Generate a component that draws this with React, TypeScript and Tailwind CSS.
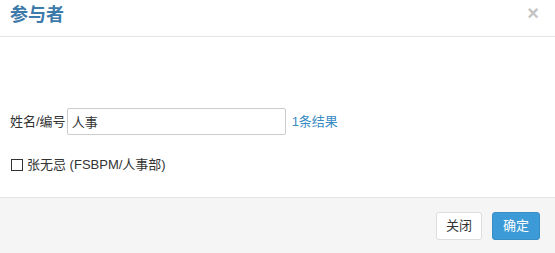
import { useState } from "react";

export default function App() {
  const [keyword, setKeyword] = useState("人事");
  const [checked, setChecked] = useState(false);

  return (
    <div className="w-[555px] h-[253px] bg-white flex flex-col text-[13px] text-[#333] font-['Liberation_Sans','Noto_Sans_CJK_SC',sans-serif]">
      {/* header */}
      <div className="h-[37px] shrink-0 border-b border-[#e5e5e5] pl-[10px] pr-[16px] flex items-center justify-between">
        <h4 className="text-[18px] font-bold text-[#3c7aaa] leading-none -mt-[7px]">参与者</h4>
        <button className="text-[20px] font-bold leading-none text-[#c4c4c4] -mt-[11px]">×</button>
      </div>

      {/* body */}
      <div className="flex-1 px-[10px] pt-[71px]">
        <div className="flex items-center">
          <span>姓名/编号</span>
          <input
            value={keyword}
            onChange={(e) => setKeyword(e.target.value)}
            className="ml-[1px] w-[219px] h-[27px] border border-[#cccccc] rounded-[2px] px-[4px] text-[13px] text-[#333] outline-none"
          />
          <span className="ml-[6px] text-[#3a8cc4]">1条结果</span>
        </div>
        <label className="mt-[20px] flex items-center gap-[4px]">
          <input
            type="checkbox"
            checked={checked}
            onChange={(e) => setChecked(e.target.checked)}
            className="appearance-none w-[12px] h-[12px] border border-[#333] bg-white m-0 ml-[1px]"
          />
          <span>张无忌 (FSBPM/人事部)</span>
        </label>
      </div>

      {/* footer */}
      <div className="h-[56px] shrink-0 bg-[#f5f5f5] border-t border-[#e5e5e5] flex items-center justify-end gap-[10px] pr-[15px]">
        <button className="h-[28px] px-[9px] bg-white border border-[#dddddd] rounded-[3px] text-[#333] text-[13px]">
          关闭
        </button>
        <button className="h-[28px] px-[10px] bg-[#3c9ad6] border border-[#3a8cc4] rounded-[3px] text-white text-[13px]">
          确定
        </button>
      </div>
    </div>
  );
}
